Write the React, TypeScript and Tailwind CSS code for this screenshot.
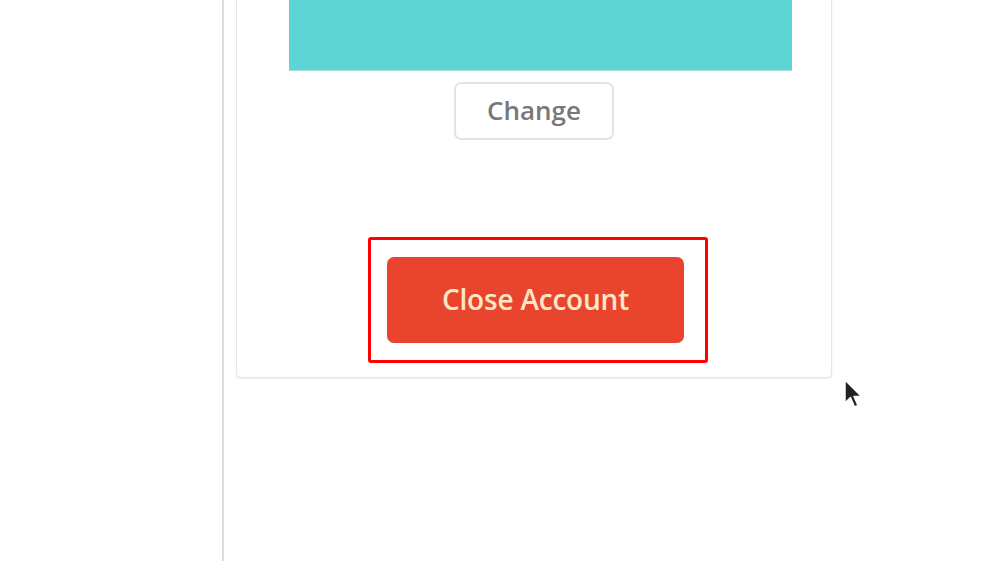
export default function App() {
  return (
    <div
      className="relative flex h-[561px] w-[1008px] overflow-hidden bg-white"
      style={{ fontFamily: '"Open Sans", "Liberation Sans", sans-serif' }}
    >
      {/* Sidebar edge */}
      <div className="h-full w-[224px] shrink-0 border-r-[2px] border-[#dcdcdc]" />

      {/* Card */}
      <div className="ml-[12px] flex h-[378px] w-[596px] shrink-0 flex-col rounded-b-[4px] border-x border-b border-[#e6e6e6] shadow-[0_1px_2px_rgba(0,0,0,0.08)]">
        <div className="ml-[52px] h-[71px] w-[503px] border-b border-[#a8dede] bg-[#5dd5d4]" />
        <div className="mt-[11px] flex justify-center">
          <button className="flex h-[58px] w-[160px] items-center justify-center rounded-[7px] border-2 border-[#e4e4e4] bg-white pb-[2px] text-[26px] font-semibold text-[#787878]">
            Change
          </button>
        </div>
        <div className="mt-[97px] flex">
          <div className="ml-[131px] rounded-[3px] border-[3px] border-[#ff0000] pb-[17px] pl-[16px] pr-[21px] pt-[17px]">
            <button className="flex h-[86px] w-[297px] items-center justify-center rounded-[7px] bg-[#e8442e] pb-[2px] text-[28px] font-semibold tracking-[-0.2px] text-[#fde6c4]">
              Close Account
            </button>
          </div>
        </div>
      </div>

      {/* Cursor */}
      <svg
        className="absolute left-[843px] top-[379px]"
        width="22"
        height="32"
        viewBox="0 0 22 32"
      >
        <path
          d="M2 1 L2 24 L7.5 18.5 L11.5 28 L15 26.5 L11 17.5 L18.5 17.5 Z"
          fill="#222222"
          stroke="#ffffff"
          strokeWidth="1.5"
          strokeLinejoin="round"
        />
      </svg>
    </div>
  );
}
